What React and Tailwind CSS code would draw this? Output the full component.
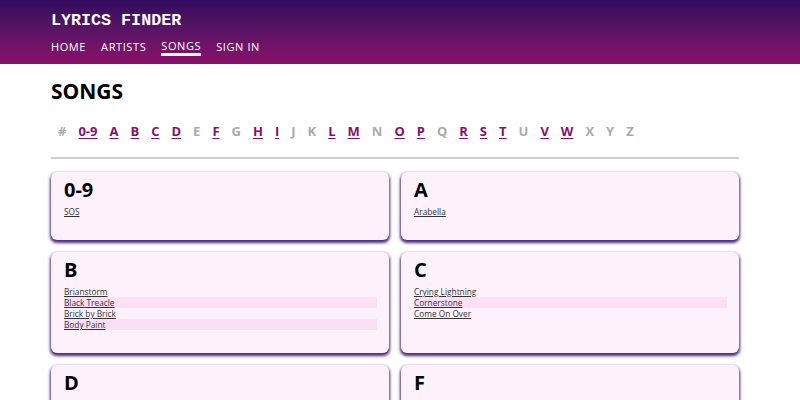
import React from "react";

const letters = [
  ["#", false], ["0-9", true], ["A", true], ["B", true], ["C", true], ["D", true], ["E", false], ["F", true], ["G", false], ["H", true], ["I", true], ["J", false], ["K", false], ["L", true], ["M", true], ["N", false], ["O", true], ["P", true], ["Q", false], ["R", true], ["S", true], ["T", true], ["U", false], ["V", true], ["W", true], ["X", false], ["Y", false], ["Z", false],
];

const groups = [
  ["0-9", ["SOS"]],
  ["A", ["Arabella"]],
  ["B", ["Brianstorm", "Black Treacle", "Brick by Brick", "Body Paint"]],
  ["C", ["Crying Lightning", "Cornerstone", "Come On Over"]],
  ["D", ["Do I Wanna Know?"]],
  ["F", ["Fluorescent Adolescent"]],
];

function Card({ title, songs }) {
  return (
    <div className="rounded-[6px] bg-[#fdf2fb] pl-[13px] pr-[12px] pt-[6px] pb-[23px] shadow-[0_2px_3px_1px_#4a2a80]">
      <h2 className="text-[20px] leading-[24px] font-bold text-black">{title}</h2>
      <ul className="mt-[4px]">
        {songs.map((s, i) => (
          <li key={s} className={`h-[11px] text-[8.3px] leading-[11px] ${i % 2 === 1 ? "bg-[#fbdff4]" : ""}`}>
            <a className="text-[#333] underline underline-offset-[1px]">{s}</a>
          </li>
        ))}
      </ul>
    </div>
  );
}

export default function App() {
  return (
    <div className="h-[400px] overflow-hidden bg-white font-['Open_Sans',sans-serif]">
      <header className="h-[64px] bg-gradient-to-b from-[#310a5f] to-[#8b0d6a] pl-[51px] pt-[11px]">
        <div className="font-['Liberation_Mono',monospace] text-[16.7px] leading-[20px] font-bold text-white">LYRICS FINDER</div>
        <nav className="mt-[8px] flex gap-[15px] text-[11px] leading-[15px] tracking-[0.6px] font-medium text-white">
          <span>HOME</span>
          <span>ARTISTS</span>
          <span className="border-b-[3px] border-white leading-[14px]">SONGS</span>
          <span>SIGN IN</span>
        </nav>
      </header>
      <main className="ml-[51px] w-[688px]">
        <h1 className="mt-[13px] text-[21px] leading-[28px] font-bold text-black">SONGS</h1>
        <div className="mt-[17px] flex gap-[12px] pl-[7px] text-[13px] leading-[18px] font-bold">
          {letters.map(([l, on]) => (
            <span key={l} className={on ? "text-[#880e6e] underline underline-offset-[2px]" : "text-[#aaaaaa]"}>{l}</span>
          ))}
        </div>
        <hr className="mt-[17px] border-t-2 border-[#d0d0d0]" />
        <div className="mt-[13px] grid grid-cols-2 gap-[12px]">
          {groups.map(([t, s]) => (
            <Card key={t} title={t} songs={s} />
          ))}
        </div>
      </main>
    </div>
  );
}
